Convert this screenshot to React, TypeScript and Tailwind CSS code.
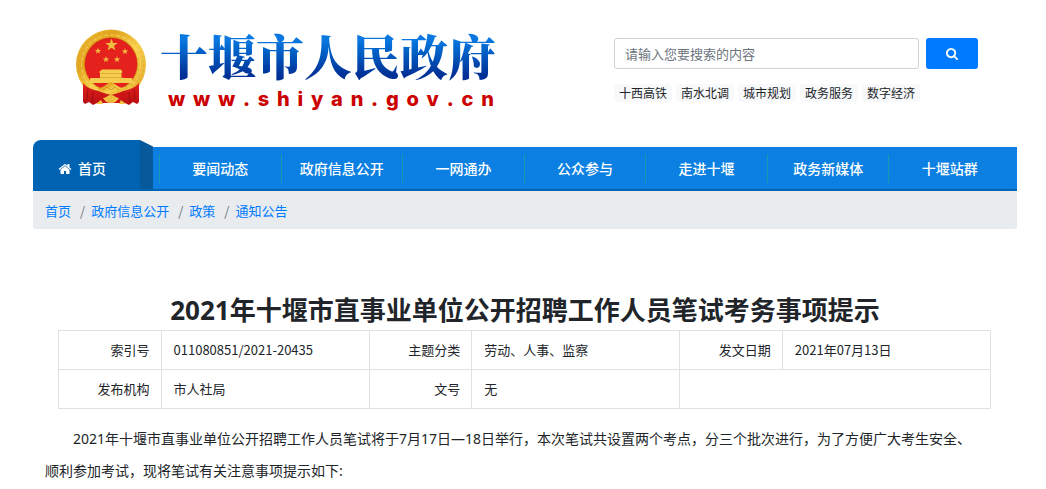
import type { ReactNode } from 'react';

const NAV_ITEMS = ['要闻动态', '政府信息公开', '一网通办', '公众参与', '走进十堰', '政务新媒体', '十堰站群'];
const HOT_WORDS = ['十西高铁', '南水北调', '城市规划', '政务服务', '数字经济'];
const CRUMBS = ['首页', '政府信息公开', '政策', '通知公告'];

const STAR = 'M0-10 2.4-3.2 9.5-3.1 3.8 1.2 5.9 8.1 0 4-5.9 8.1-3.8 1.2-9.5-3.1-2.4-3.2Z';

/** National emblem shown beside the site name */
function Emblem() {
  return (
    <svg viewBox="5 9 73 78" className="h-[78px] w-[73px] shrink-0" aria-hidden="true">
      <defs>
        <linearGradient id="gold" x1="0" y1="0" x2="1" y2="1">
          <stop offset="0" stopColor="#f0bd35" />
          <stop offset="0.3" stopColor="#e3a620" />
          <stop offset="0.55" stopColor="#f8d04c" />
          <stop offset="1" stopColor="#e0a422" />
        </linearGradient>
        <linearGradient id="drape" x1="0" y1="0" x2="0" y2="1">
          <stop offset="0" stopColor="#e3201b" />
          <stop offset="1" stopColor="#b80e12" />
        </linearGradient>
      </defs>
      <circle cx="41" cy="44.5" r="35" fill="url(#gold)" />
      <circle cx="41" cy="44.5" r="32.5" fill="none" stroke="#c98d18" strokeWidth="1" strokeDasharray="2 3" opacity="0.35" />
      <circle cx="41" cy="44.5" r="29.5" fill="none" stroke="#ffe27a" strokeWidth="1.2" strokeDasharray="4 2" opacity="0.5" />
      <circle cx="41" cy="44" r="26.8" fill="#c8860f" />
      <circle cx="41" cy="44" r="26.2" fill="#e4211d" />
      <g fill="#edbd3e">
        <path d={STAR} transform="translate(41.5 25) scale(0.66)" />
        <path d={STAR} transform="translate(28 31) scale(0.34)" />
        <path d={STAR} transform="translate(55 31.5) scale(0.34)" />
        <path d={STAR} transform="translate(36 39.5) scale(0.34)" />
        <path d={STAR} transform="translate(47 39.5) scale(0.34)" />
      </g>
      <path d="M32 49.5h19l1.5 2.5-1 1v5H62l1.500 5h-44.500L20.500 58H30v-5l-1-1Z" fill="#f5cc4d" />
      <path d="M31 53.500h21M30 57.500h23" stroke="#cf8f1d" strokeWidth="0.5" />
      <path d="M13 63c4 5 10 7 16 8l5 3-2 10-5-1-4 2-4-3-4 2-2-2Z" fill="url(#drape)" />
      <path d="M69 63c-4 5-10 7-16 8l-5 3 2 10 5-1 4 2 4-3 4 2 2-2Z" fill="url(#drape)" />
      <path d="M18 69l-1 11M23 72l-1 10M64 69l1 11M59 72l1 10" stroke="#8f0a0e" strokeWidth="0.7" />
      <path d="M29 72h24l-3 11H32Z" fill="#ce1517" />
      <path d="M27 67c5 2 7-1 10-3l4-2 4 2c3 2 5 5 10 3l-4 5-6 2-4 1-4-1-6-2Z" fill="url(#gold)" />
      <path d="M33 70l4-3 4 3 4-3 4 3" fill="none" stroke="#bd7f13" strokeWidth="0.7" />
      <path d="M33 78c4 0 4-3 8-3s4 3 8 3c-2 3-4 5-8 5s-6-2-8-5Z" fill="#f2c544" />
      <path d="M38 77l1 5M41 76v7M44 77l-1 5" stroke="#d39a25" strokeWidth="0.5" />
      <path d="M27 83l4-3 2 4h-6ZM55 83l-4-3-2 4h6Z" fill="#f2c544" />
    </svg>
  );
}

function HomeIcon() {
  return (
    <svg viewBox="0 128 1664 1536" className="h-3 w-[14px]" fill="currentColor" aria-hidden="true">
      <path d="M1408 992v480q0 26-19 45t-45 19H960v-384H704v384H320q-26 0-45-19t-19-45V992q0-1 .5-3t.5-3l575-474 575 474q1 2 1 6zm223-69l-62 74q-8 9-21 11h-3q-13 0-21-7L832 424l-692 577q-12 8-24 7-13-2-21-11l-62-74q-8-10-7-23.5t11-21.500l719-599q32-26 76-26t76 26l244 204V288q0-14 9-23t23-9h192q14 0 23 9t9 23v408l219 182q10 8 11 21.500t-7 23.500z" />
    </svg>
  );
}

function SearchIcon() {
  return (
    <svg viewBox="0 128 1664 1664" className="h-3 w-3" fill="currentColor" aria-hidden="true">
      <path d="M1152 832q0-185-131.500-316.500T704 384 387.500 515.500 256 832t131.500 316.500T704 1280t316.500-131.500T1152 832zm512 832q0 52-38 90t-90 38q-54 0-90-38l-343-342q-179 124-399 124-143 0-273.500-55.500t-225-150-150-225T0 832t55.500-273.500 150-225 225-150T704 128t273.500 55.500 225 150 150 225T1408 832q0 220-124 399l343 343q37 37 37 90z" />
    </svg>
  );
}

function SiteHeader() {
  return (
    <header className="flex h-[140px] items-start justify-between pr-[39px] pl-[42px]">
      <a href="#home" className="flex items-start gap-3 pt-[29px]">
        <Emblem />
        <span className="flex flex-col pt-[3px]">
          <span className="bg-linear-to-b from-[#0a78e0] from-15% to-[#003096] to-80% bg-clip-text font-['Liberation_Serif','Noto_Serif_CJK_SC','Noto_Sans_CJK_SC',serif] text-[48px] leading-[54px] font-black text-transparent">
            十堰市人民政府
          </span>
          <span className="flex justify-between pt-px pr-[2px] pl-2 font-['Inter',sans-serif] text-[20px] leading-6 font-extrabold text-[#cc0000]">
            {'www.shiyan.gov.cn'.split('').map((letter, i) => (
              <span key={i}>{letter}</span>
            ))}
          </span>
        </span>
      </a>
      <div className="w-[364px] pt-[38px]">
        <form className="flex gap-[7px]" onSubmit={(e) => e.preventDefault()}>
          <input
            type="search"
            aria-label="请输入您要搜索的内容"
            placeholder="请输入您要搜索的内容"
            className="h-[31px] min-w-0 flex-1 rounded-[3px] border border-[#ced4da] px-[10px] text-[13px] outline-none placeholder:text-[#6c757d]"
          />
          <button type="submit" aria-label="搜索" className="flex h-[31px] w-[52px] items-center justify-center rounded-[3px] bg-[#007bff] text-white">
            <SearchIcon />
          </button>
        </form>
        <div className="mt-[15px] flex gap-1">
          {HOT_WORDS.map((word) => (
            <a key={word} href="#search" className="rounded-[3px] bg-[#f8f9fa] px-[5px] text-[12px] leading-[18px] whitespace-nowrap">
              {word}
            </a>
          ))}
        </div>
      </div>
    </header>
  );
}

function MainNav() {
  return (
    <nav className="flex items-end text-[14px] font-medium text-white">
      <a href="#home" className="flex h-[51px] w-[120px] border-b-2 border-[#0063b1]">
        <span className="flex flex-1 items-center gap-[6px] rounded-tl-lg bg-[#0063b1] pt-2 pl-[25px]">
          <HomeIcon />
          首页
        </span>
        <svg viewBox="0 0 13 49" className="h-[49px] w-[13px]" preserveAspectRatio="none" aria-hidden="true">
          <path d="M0 0 13 6.500V49H0Z" fill="#065a9c" />
        </svg>
      </a>
      <ul className="flex h-11 flex-1 items-center border-b-2 border-[#0063b1] bg-[#0c80e2] pr-[7px] pl-[6px]">
        {NAV_ITEMS.map((item) => (
          <li key={item} className="flex-1 border-l border-[#179aad]">
            <a href="#section" className="block h-[29px] text-center leading-[29px]">
              {item}
            </a>
          </li>
        ))}
      </ul>
    </nav>
  );
}

function Breadcrumb() {
  return (
    <ol className="flex h-[38px] items-center rounded-[3px] bg-[#e9ecef] px-3 pt-[2px] text-[13px]">
      {CRUMBS.map((crumb, i) => (
        <li key={crumb} className="flex">
          {i > 0 && <span className="pr-[6px] pl-[9px] text-[#6c757d]">/</span>}
          <a href="#crumb" className="text-[#007bff]">
            {crumb}
          </a>
        </li>
      ))}
    </ol>
  );
}

function LabelCell({ children }: { children: ReactNode }) {
  return (
    <th scope="row" className="h-[39px] w-[11%] border border-[#dee2e6] px-[11px] text-right font-normal">
      {children}
    </th>
  );
}

function ValueCell({ children }: { children?: ReactNode }) {
  return <td className="h-[39px] border border-[#dee2e6] px-3">{children}</td>;
}

export default function App() {
  return (
    <div
      lang="zh-CN"
      className="bg-white pr-[29px] pl-[33px] font-['Noto_Sans_CJK_SC',sans-serif] text-[#212529]"
    >
      <SiteHeader />
      <MainNav />
      <Breadcrumb />
      <main className="pt-[61px] font-['Noto_Sans','Noto_Sans_CJK_SC',sans-serif]">
        <h1 className="text-center text-[26px] leading-10 font-bold">2021年十堰市直事业单位公开招聘工作人员笔试考务事项提示</h1>
        <div className="pr-[26px] pl-[25px] font-['Noto_Sans_CJK_SC',sans-serif]">
          <table className="w-full table-fixed border-collapse text-[13px]">
            <tbody>
              <tr>
                <LabelCell>索引号</LabelCell>
                <ValueCell>011080851/2021-20435</ValueCell>
                <LabelCell>主题分类</LabelCell>
                <ValueCell>劳动、人事、监察</ValueCell>
                <LabelCell>发文日期</LabelCell>
                <ValueCell>2021年07月13日</ValueCell>
              </tr>
              <tr>
                <LabelCell>发布机构</LabelCell>
                <ValueCell>市人社局</ValueCell>
                <LabelCell>文号</LabelCell>
                <ValueCell>无</ValueCell>
                <td colSpan={2} className="border border-[#dee2e6]" />
              </tr>
            </tbody>
          </table>
        </div>
        <p className="mt-[14px] px-3 indent-[2em] text-[14px] leading-8">
          2021年十堰市直事业单位公开招聘工作人员笔试将于7月17日—18日举行，本次笔试共设置两个考点，分三个批次进行，为了方便广大考生安全、
          <br />
          顺利参加考试，现将笔试有关注意事项提示如下:
        </p>
      </main>
    </div>
  );
}
